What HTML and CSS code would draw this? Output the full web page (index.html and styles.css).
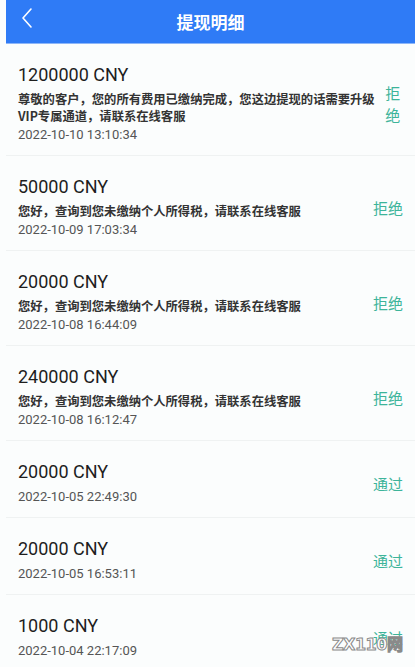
FILE: index.html
```html
<!DOCTYPE html>
<html lang="zh-CN">
<head>
    <meta charset="UTF-8">
    <meta name="viewport" content="width=device-width, initial-scale=1.0">
    <title>提现明细</title>
    <link rel="stylesheet" href="styles.css">
</head>
<body>
    <div id="page">
        <header class="topbar">
            <a class="back" href="#">
                <svg width="14" height="22" viewBox="0 0 14 22"><path d="M11 2 L3 11 L11 20" fill="none" stroke="#fff" stroke-width="1.6" stroke-linecap="round" stroke-linejoin="round"/></svg>
            </a>
            <h1>提现明细</h1>
        </header>

        <ul class="records">
            <li class="record">
                <div class="info">
                    <div class="amount">1200000 CNY</div>
                    <div class="desc">尊敬的客户，您的所有费用已缴纳完成，您这边提现的话需要升级VIP专属通道，请联系在线客服</div>
                    <div class="date">2022-10-10 13:10:34</div>
                </div>
                <div class="status">拒绝</div>
            </li>
            <li class="record">
                <div class="info">
                    <div class="amount">50000 CNY</div>
                    <div class="desc">您好，查询到您未缴纳个人所得税，请联系在线客服</div>
                    <div class="date">2022-10-09 17:03:34</div>
                </div>
                <div class="status">拒绝</div>
            </li>
            <li class="record">
                <div class="info">
                    <div class="amount">20000 CNY</div>
                    <div class="desc">您好，查询到您未缴纳个人所得税，请联系在线客服</div>
                    <div class="date">2022-10-08 16:44:09</div>
                </div>
                <div class="status">拒绝</div>
            </li>
            <li class="record">
                <div class="info">
                    <div class="amount">240000 CNY</div>
                    <div class="desc">您好，查询到您未缴纳个人所得税，请联系在线客服</div>
                    <div class="date">2022-10-08 16:12:47</div>
                </div>
                <div class="status">拒绝</div>
            </li>
            <li class="record">
                <div class="info">
                    <div class="amount">20000 CNY</div>
                    <div class="date">2022-10-05 22:49:30</div>
                </div>
                <div class="status">通过</div>
            </li>
            <li class="record">
                <div class="info">
                    <div class="amount">20000 CNY</div>
                    <div class="date">2022-10-05 16:53:11</div>
                </div>
                <div class="status">通过</div>
            </li>
            <li class="record">
                <div class="info">
                    <div class="amount">1000 CNY</div>
                    <div class="date">2022-10-04 22:17:09</div>
                </div>
                <div class="status">通过</div>
            </li>
        </ul>

        <div class="watermark">ZX110网</div>
    </div>
</body>
</html>
```

FILE: styles.css
```css
html, body {
    margin: 0;
    padding: 0;
    background-color: #fbfdfd;
}
body {
    font-family: Roboto, "Noto Sans CJK SC", sans-serif;
    color: #222;
    overflow: hidden;
}
#page {
    position: relative;
    margin-left: 6px;
    height: 667px;
}
.topbar {
    position: relative;
    height: 43px;
    background-color: #2f7bf6;
    border-bottom: 1px solid #8db6f8;
    display: flex;
    align-items: center;
    justify-content: center;
}
.topbar h1 {
    margin: 0;
    color: #fff;
    font-size: 17px;
    font-weight: bold;
    font-family: "Noto Sans CJK SC", sans-serif;
}
.back {
    position: absolute;
    left: 14px;
    top: 7px;
    display: block;
}
.records {
    list-style: none;
    margin: 0;
    padding: 0;
}
.record {
    display: flex;
    align-items: center;
    padding: 20px 12px 11px 12px;
    border-bottom: 1px solid #eff2f2;
}
.info {
    flex: 1 1 auto;
    min-width: 0;
}
.amount {
    font-size: 18px;
    line-height: 22px;
    color: #1e1e1e;
    margin-bottom: 5px;
}
.desc {
    font-family: "Noto Sans CJK SC", sans-serif;
    font-size: 12.3px;
    line-height: 17px;
    font-weight: bold;
    color: #333;
}
.date {
    font-size: 13px;
    line-height: 18px;
    color: #555;
    margin-top: 5px;
}
.desc + .date {
    margin-top: 1px;
}
.status {
    flex: 0 1 auto;
    margin-left: 4px;
    text-align: center;
    font-family: "Noto Sans CJK SC", sans-serif;
    font-size: 15px;
    line-height: 22px;
    color: #3db49a;
}
.watermark {
    position: absolute;
    left: 326px;
    top: 631px;
    font-family: "DejaVu Sans", sans-serif;
    font-weight: bold;
    font-size: 16px;
    color: #fff;
    -webkit-text-stroke: 1px #8a8a8a;
    letter-spacing: -0.5px;
}
```
